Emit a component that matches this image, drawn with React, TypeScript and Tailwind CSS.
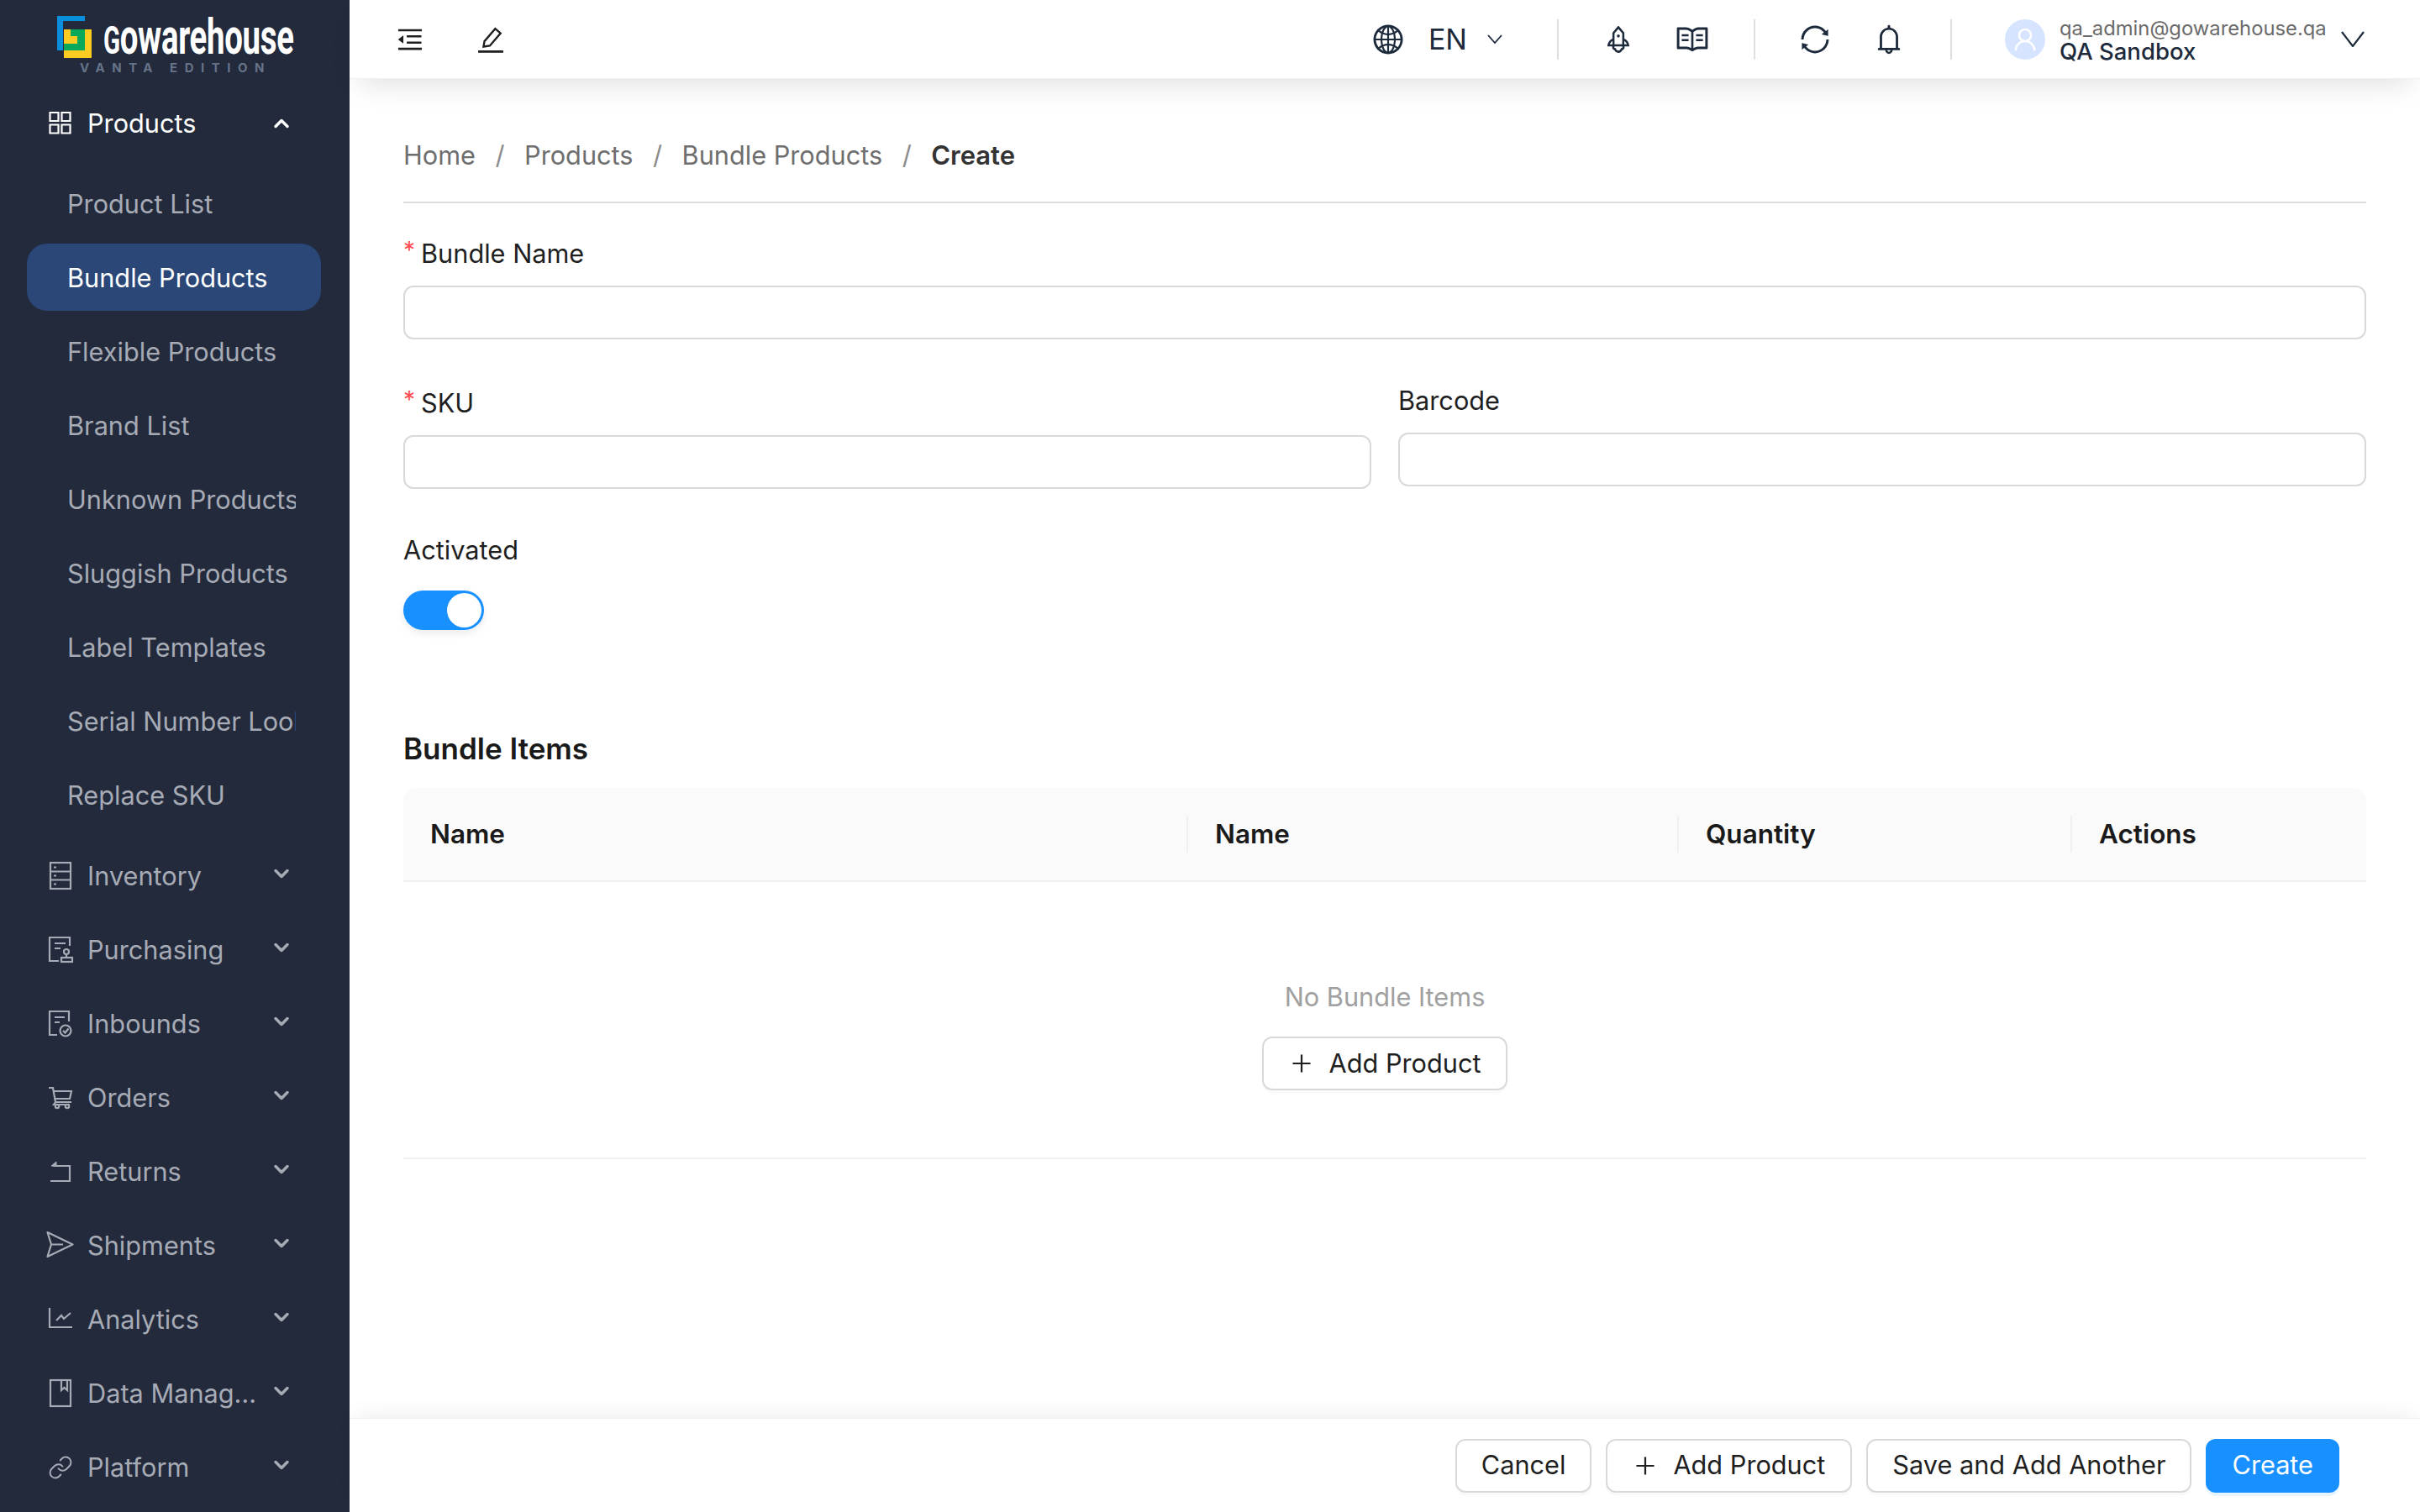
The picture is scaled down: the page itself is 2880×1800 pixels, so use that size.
import { ChevronDown, ChevronUp, Link } from 'lucide-react'
import {
  AiOutlineBell,
  AiOutlineGlobal,
  AiOutlineMenuFold,
  AiOutlinePlus,
  AiOutlineRead,
  AiOutlineRocket,
  AiOutlineSync,
  AiOutlineUser,
} from 'react-icons/ai'
import type { ReactNode } from 'react'

// Sidebar glyphs share one box so the labels stay lined up
function NavIcon({ children }: { children: ReactNode }) {
  return (
    <svg
      viewBox="-1 0 32 36"
      className="w-[32px] h-[36px] shrink-0 overflow-visible"
      fill="none"
      stroke="currentColor"
      strokeWidth="2.2"
    >
      {children}
    </svg>
  )
}

const subItems = [
  'Product List',
  'Bundle Products',
  'Flexible Products',
  'Brand List',
  'Unknown Products',
  'Sluggish Products',
  'Label Templates',
  'Serial Number Lookup',
  'Replace SKU',
]

const navItems: { label: string; icon: ReactNode }[] = [
  {
    label: 'Inventory',
    icon: (
      <NavIcon>
        <rect x="3" y="2" width="24" height="31" />
        <path d="M3 12.5H27M3 22.5H27M7 7.5H10M7 17.5H10M7 27.5H10" />
      </NavIcon>
    ),
  },
  {
    label: 'Purchasing',
    icon: (
      <NavIcon>
        <path d="M13 31H2V3H26V13M8 10H21M8 16H15" />
        <circle cx="22" cy="20" r="3" />
        <path d="M22 23V27" />
        <rect x="16" y="27" width="13" height="5" />
      </NavIcon>
    ),
  },
  {
    label: 'Inbounds',
    icon: (
      <NavIcon>
        <path d="M11 31H2V3H25V15M8 10H20M8 16H14" />
        <circle cx="21" cy="26" r="6.5" />
        <path d="M18 26L20.5 28.5L24.5 23.5" />
      </NavIcon>
    ),
  },
  {
    label: 'Orders',
    icon: (
      <NavIcon>
        <path d="M1 6H6L9 23H28M7 10H28L26 19H9M9 23L7 26H26" />
        <circle cx="11" cy="28" r="2.2" />
        <circle cx="23" cy="28" r="2.2" />
      </NavIcon>
    ),
  },
  {
    label: 'Returns',
    icon: (
      <NavIcon>
        <path d="M6 11H26V29H3" />
        <path d="M10 6L4 11H10Z" fill="currentColor" strokeWidth="1" />
      </NavIcon>
    ),
  },
  {
    label: 'Shipments',
    icon: (
      <NavIcon>
        <path d="M-0.5 2L29.5 16.5L-0.5 31L4 16.5ZM4 16.5L18 16.5" strokeLinejoin="round" />
      </NavIcon>
    ),
  },
  {
    label: 'Analytics',
    icon: (
      <NavIcon>
        <path d="M2 4V27H29M10 19L16 13L19 17L27 10" />
      </NavIcon>
    ),
  },
  {
    label: 'Data Management',
    icon: (
      <NavIcon>
        <rect x="3" y="2" width="24" height="31" />
        <path d="M16 2V14L19.5 11L23 14V2" />
      </NavIcon>
    ),
  },
  {
    label: 'Platform',
    icon: <Link size={30} strokeWidth={1.6} className="shrink-0 ml-[1px] mr-[1px]" />,
  },
]

function Separator() {
  return <div className="w-[2px] h-[48px] bg-[#e0e0e0] shrink-0" />
}

function Sidebar() {
  return (
    <aside className="w-[416px] shrink-0 h-full bg-[#222a3c] flex flex-col overflow-hidden">
      {/* Logo */}
      <div className="h-[107px] shrink-0 pl-[68px] pt-[19px]">
        <div className="flex h-[50px]">
          <svg viewBox="0 0 41 50" className="w-[41px] h-[50px] shrink-0">
            <path d="M0 0H33V6H7V41H0Z" fill="#0a8fdc" />
            <rect x="8" y="16" width="33" height="34" fill="#fccc23" />
            <rect x="8" y="16" width="25" height="25" fill="#0aa85a" />
            <path d="M8 16H16V24H24V33H8Z" fill="#fccc23" />
          </svg>
          <div className="ml-[14px] w-[225px] h-[50px] whitespace-nowrap origin-top-left scale-x-[0.64] font-[family-name:Roboto,sans-serif] font-bold text-white text-[60px] leading-[50px] tracking-[-0.5px]">
            <span className="text-[46px]">G</span>owarehouse
          </div>
        </div>
        <div className="mt-[4px] ml-[27px] text-[15px] leading-[16px] font-bold tracking-[8.5px] text-[#667388] whitespace-nowrap">
          VANTA EDITION
        </div>
      </div>

      <nav className="pl-[32px] pr-[34px] flex flex-col">
        <div className="h-[80px] flex items-center pl-[24px] text-white">
          <NavIcon>
            <path d="M2.5 5H12.5V15H2.5ZM16.5 5H26.5V15H16.5ZM2.5 19.5H12.5V29.5H2.5ZM16.5 19.5H26.5V29.5H16.5Z" />
          </NavIcon>
          <span className="ml-[16px] text-[30.7px] leading-[40px]">Products</span>
          <ChevronUp size={28} strokeWidth={3} className="ml-auto mr-[33px]" />
        </div>

        <div className="mt-[15px] flex flex-col gap-[8px]">
          {subItems.map((item) => (
            <div
              key={item}
              className={`h-[80px] rounded-[24px] pl-[48px] pr-[30px] pt-[2px] flex items-center overflow-hidden whitespace-nowrap text-[30.7px] leading-[40px] ${
                item === 'Bundle Products' ? 'bg-[#2a4778] text-white' : 'text-[#a7abb5]'
              }`}
            >
              <span className="overflow-hidden">{item}</span>
            </div>
          ))}
        </div>

        <div className="mt-[17px] flex flex-col gap-[8px]">
          {navItems.map((item) => (
            <div key={item.label} className="h-[80px] flex items-center pl-[24px] text-[#a7abb5]">
              {item.icon}
              <span className="ml-[16px] w-[204px] truncate text-[30.7px] leading-[40px]">{item.label}</span>
              <ChevronDown size={28} strokeWidth={3} className="ml-auto mr-[33px] mt-[-6px]" />
            </div>
          ))}
        </div>
      </nav>
    </aside>
  )
}

function Header() {
  return (
    <header className="h-[94px] shrink-0 bg-white flex items-center relative z-10 border-b border-[#f0f0f0] shadow-[0_16px_36px_-12px_rgba(0,0,0,0.14)]">
      <AiOutlineMenuFold size={36} className="ml-[54px] text-[#1f1f1f]" />
      <svg viewBox="0 0 30 30" className="ml-[62px] w-[32px] h-[32px] text-[#1f1f1f]" fill="none" stroke="currentColor" strokeWidth="2.2">
        <path d="M7 23L8 17L20 3L26 8L14 22Z" />
        <path d="M1 28.5H29" strokeWidth="2.6" />
      </svg>

      <div className="ml-auto flex items-center text-[#1d2a3c]">
        <AiOutlineGlobal size={40} />
        <span className="ml-[28px] text-[34px] leading-[44px]">EN</span>
        <svg viewBox="0 0 18 11" className="ml-[24px] w-[18px] h-[11px]" fill="none" stroke="currentColor" strokeWidth="1.8">
          <path d="M1 1L9 10L17 1" />
        </svg>
        <div className="ml-[65px]">
          <Separator />
        </div>
        <AiOutlineRocket size={38} className="ml-[52px]" />
        <AiOutlineRead size={42} className="ml-[48px]" />
        <div className="ml-[52px]">
          <Separator />
        </div>
        <AiOutlineSync size={40} className="ml-[51px]" />
        <AiOutlineBell size={40} className="ml-[48px]" />
        <div className="ml-[53px]">
          <Separator />
        </div>
        <div className="ml-[63px] w-[48px] h-[48px] rounded-full bg-[#d6e4ff] flex items-center justify-center text-white">
          <AiOutlineUser size={34} />
        </div>
        <div className="ml-[17px] w-[316px] flex flex-col">
          <span className="text-[23.8px] leading-[28px] text-[#6b6b6b] whitespace-nowrap">qa_admin@gowarehouse.qa</span>
          <span className="text-[27.5px] leading-[26px] font-medium">QA Sandbox</span>
        </div>
        <svg viewBox="0 0 28 19" className="ml-[19px] mr-[66px] w-[28px] h-[19px]" fill="none" stroke="currentColor" strokeWidth="2.2">
          <path d="M1 1L14 18L27 1" />
        </svg>
      </div>
    </header>
  )
}

function Field({ label, required, children }: { label: string; required?: boolean; children?: ReactNode }) {
  return (
    <div>
      <div className="h-[44px] pt-[3px] flex items-center text-[30.7px] leading-[40px] text-[#1f1f1f]">
        {required && <span className="text-[#ff4d4f] mr-[7px] text-[28px] leading-[28px] mt-[-8px]">*</span>}
        {label}
      </div>
      <div className="mt-[18px] h-[64px] rounded-[12px] border-2 border-[#d9d9d9] bg-white">{children}</div>
    </div>
  )
}

function Button({ children, className }: { children: ReactNode; className: string }) {
  return (
    <button className={`h-[64px] rounded-[12px] flex items-center text-[30.7px] whitespace-nowrap ${className}`}>
      {children}
    </button>
  )
}

const outlined = 'bg-white text-[#1f1f1f] border-2 border-[#d9d9d9] shadow-[0_4px_0_rgba(0,0,0,0.02)]'

export default function App() {
  const crumbs = ['Home', 'Products', 'Bundle Products']
  const columns = [
    { name: 'Name', width: 'w-[934px]' },
    { name: 'Name', width: 'w-[584px]' },
    { name: 'Quantity', width: 'w-[468px]' },
    { name: 'Actions', width: 'w-[350px]' },
  ]

  return (
    <div className="w-[2880px] h-[1800px] flex overflow-hidden bg-white antialiased font-[family-name:Inter,sans-serif]">
      <Sidebar />
      <div className="flex-1 min-w-0 flex flex-col">
        <Header />

        <main className="flex-1 min-h-0 px-[64px] pt-[71px]">
          {/* Breadcrumb */}
          <div className="h-[40px] flex items-center text-[30.7px] leading-[40px] text-[#6e6e6e]">
            {crumbs.map((crumb) => (
              <span key={crumb} className="flex items-center">
                {crumb}
                <span className="mx-[23.5px] text-[#8c8c8c]">/</span>
              </span>
            ))}
            <span className="font-semibold text-[31px] text-[#333333]">Create</span>
          </div>
          <div className="mt-[35px] h-[2px] bg-[#dcdcdc]" />

          <div className="mt-[36px]">
            <Field label="Bundle Name" required />
          </div>
          <div className="mt-[49px] grid grid-cols-2 gap-x-[32px] items-start">
            <div className="pt-[3px]">
              <Field label="SKU" required />
            </div>
            <Field label="Barcode" />
          </div>

          <div className="mt-[51px] h-[44px] flex items-center text-[30.7px] text-[#1f1f1f]">Activated</div>
          <div className="mt-[26px] w-[96px] h-[47px] rounded-full bg-[#1890ff] flex items-center justify-end pr-[3px] shadow-[0_4px_10px_rgba(0,0,0,0.08)]">
            <div className="w-[41px] h-[41px] rounded-full bg-white" />
          </div>

          <h2 className="mt-[116px] h-[50px] flex items-center text-[35px] font-semibold text-[#1a1a1a]">Bundle Items</h2>

          {/* Table */}
          <div className="mt-[22px] h-[112px] rounded-t-[16px] bg-[#fafafa] border-b-2 border-[#f0f0f0] flex">
            {columns.map((col, i) => (
              <div key={i} className={`${col.width} h-full flex items-center px-[32px] relative text-[31.5px] font-semibold text-[#1a1a1a]`}>
                {col.name}
                {i < 3 && <div className="absolute right-0 w-[2px] h-[44px] bg-[#f0f0f0]" />}
              </div>
            ))}
          </div>
          <div className="border-b-2 border-[#f0f0f0] pb-[80px] flex flex-col items-center">
            <div className="mt-[115px] h-[44px] flex items-center text-[30.7px] text-[#a0a0a0]">No Bundle Items</div>
            <div className="mt-[25px]">
              <Button className={`px-[30px] ${outlined}`}>
                <AiOutlinePlus size={30} className="mr-[18px]" />
                Add Product
              </Button>
            </div>
          </div>
        </main>

        {/* Footer actions */}
        <footer className="h-[112px] shrink-0 bg-white border-t border-[#f0f0f0] flex items-center justify-end gap-[17px] pr-[96px] shadow-[0_-10px_24px_-8px_rgba(0,0,0,0.08)] relative">
          <Button className={`px-[29px] ${outlined}`}>Cancel</Button>
          <Button className={`px-[30px] ${outlined}`}>
            <AiOutlinePlus size={30} className="mr-[18px]" />
            Add Product
          </Button>
          <Button className={`px-[29px] ${outlined}`}>Save and Add Another</Button>
          <Button className="px-[31px] bg-[#1890ff] text-white shadow-[0_4px_0_rgba(5,145,255,0.1)]">Create</Button>
        </footer>
      </div>
    </div>
  )
}
